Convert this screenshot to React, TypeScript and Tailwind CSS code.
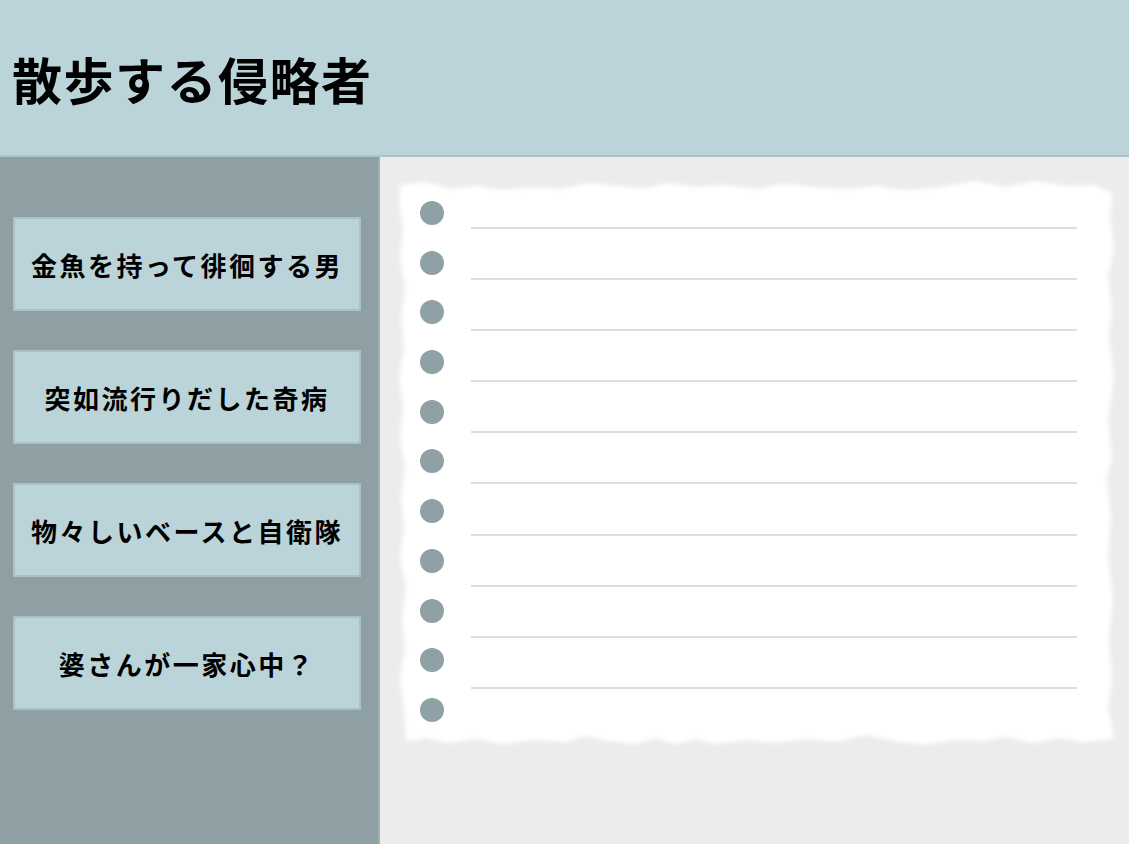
const topics = [
  "金魚を持って徘徊する男",
  "突如流行りだした奇病",
  "物々しいベースと自衛隊",
  "婆さんが一家心中？",
];

const bullets = Array.from({ length: 11 });
const lines = Array.from({ length: 10 });

const paperPath =
  "M 6 8 L 30 5 L 55 12 L 80 9 L 110 13 L 140 10 L 165 12 L 195 6 L 220 9 L 250 11 L 275 6 L 300 10 L 330 8 L 360 12 L 390 7 L 420 10 L 450 12 L 480 9 L 510 13 L 540 11 L 580 4 L 610 10 L 640 4 L 670 9 L 700 8 L 716 16 " +
  "L 714 40 L 718 70 L 712 100 L 716 130 L 713 160 L 718 200 L 712 240 L 716 280 L 711 300 L 715 340 L 712 380 L 717 420 L 713 460 L 716 500 L 712 530 L 718 560 " +
  "L 690 563 L 660 559 L 640 564 L 610 558 L 590 562 L 560 561 L 530 566 L 500 562 L 470 556 L 440 563 L 410 560 L 380 564 L 350 561 L 320 565 L 300 560 L 280 565 L 260 559 L 240 565 L 215 562 L 190 557 L 170 563 L 140 561 L 110 565 L 80 560 L 55 564 L 30 559 L 12 562 " +
  "L 10 530 L 6 500 L 11 470 L 8 440 L 12 410 L 6 380 L 10 350 L 7 320 L 11 290 L 6 260 L 9 230 L 5 200 L 10 170 L 7 140 L 11 110 L 6 80 L 9 50 L 5 25 Z";

function TornPaper() {
  return (
    <svg
      className="absolute left-[15px] top-[21px]"
      width="728"
      height="575"
      viewBox="0 0 728 575"
    >
      <defs>
        <filter id="soft" x="-5%" y="-5%" width="110%" height="110%">
          <feGaussianBlur stdDeviation="2" />
        </filter>
      </defs>
      <path d={paperPath} fill="#ffffff" stroke="#ffffff" strokeWidth="2" strokeLinejoin="round" filter="url(#soft)" />
    </svg>
  );
}

export default function App() {
  return (
    <div className="flex h-[844px] w-full flex-col font-['Noto_Sans_CJK_JP',sans-serif] text-black">
      <header className="flex h-[157px] shrink-0 items-center border-b-2 border-[#aac4c9] bg-[#bad4d9] pl-[12px]">
        <h1 className="text-[50px] font-bold leading-none tracking-[1.5px]">散歩する侵略者</h1>
      </header>

      <div className="flex flex-1">
        <aside className="flex w-[380px] shrink-0 flex-col gap-[39px] border-r-2 border-[#9bb0b4] bg-[#8ea0a4] pl-[13px] pt-[60px]">
          {topics.map((t) => (
            <button
              key={t}
              className="flex h-[94px] w-[348px] items-center justify-center border-2 border-[#a8c1c6] bg-[#bad4d9] text-[26px] font-bold tracking-[2.5px]"
            >
              {t}
            </button>
          ))}
        </aside>

        <main className="relative flex-1 bg-[#ebeceb]">
          <TornPaper />
          <div className="relative flex pl-[40px] pt-[44px]">
            <div className="flex flex-col gap-[25.7px]">
              {bullets.map((_, i) => (
                <span key={i} className="block h-[24px] w-[24px] rounded-full bg-[#8fa1a5]" />
              ))}
            </div>
            <div className="ml-[27px] flex w-[606px] flex-col gap-[49.1px] pt-[26px]">
              {lines.map((_, i) => (
                <div key={i} className="h-[2px] bg-[#dedede]" />
              ))}
            </div>
          </div>
        </main>
      </div>
    </div>
  );
}
